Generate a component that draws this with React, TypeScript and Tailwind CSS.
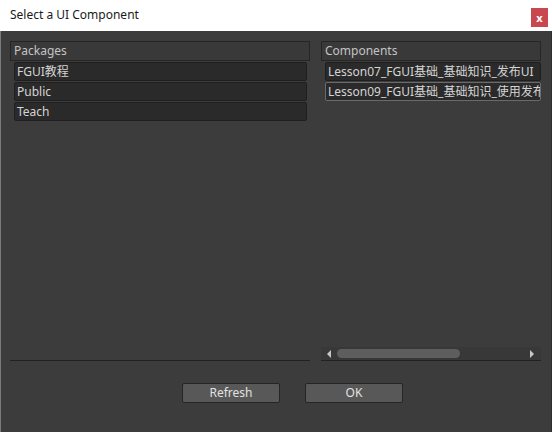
const font = { fontFamily: '"Noto Sans", "Noto Sans CJK SC", sans-serif' };

const packages = ['FGUI教程', 'Public', 'Teach'];
const components = ['Lesson07_FGUI基础_基础知识_发布UI', 'Lesson09_FGUI基础_基础知识_使用发布的UI'];

function Header({ label }: { label: string }) {
    return (
        <div className="h-[20px] border border-[#262626] bg-[#393939] pl-[3px] text-[12px] leading-[18px] text-[#c4c4c4]">
            {label}
        </div>
    );
}

function Item({ label, focused }: { label: string; focused?: boolean }) {
    return (
        <div
            className={`h-[19px] overflow-hidden whitespace-nowrap rounded-[2px] border bg-[#2a2a2a] pl-[2px] text-[12px] leading-[17px] text-[#d4d4d4] ${
                focused ? 'border-[#6a6a6a]' : 'border-[#1f1f1f]'
            }`}
        >
            {label}
        </div>
    );
}

export default function App() {
    return (
        <div className="flex h-[432px] w-[552px] flex-col overflow-hidden bg-[#3c3c3c]" style={font}>
            {/* Title bar */}
            <div className="flex h-[31px] items-start justify-between bg-white">
                <span className="pl-[10px] pt-[7px] text-[12px] leading-[16px] text-[#1a1a1a]">Select a UI Component</span>
                <div className="mr-[4px] mt-[8px] flex h-[19px] w-[17px] items-center justify-center bg-[#c9474f] text-[11px] font-bold leading-none text-white">
                    x
                </div>
            </div>

            {/* Body */}
            <div className="flex flex-1 flex-col border-l border-r border-l-[#7a7a7a] border-r-[#2e2e2e]">
                <div className="flex gap-[11px] pl-[9px] pt-[10px]">
                    {/* Packages */}
                    <div className="flex h-[320px] w-[300px] flex-col">
                        <Header label="Packages" />
                        <div className="flex flex-1 flex-col gap-[1px] pl-[4px] pr-[3px] pt-[1px]">
                            {packages.map(p => (
                                <Item key={p} label={p} />
                            ))}
                        </div>
                        <div className="h-[1px] bg-[#222222]" />
                    </div>

                    {/* Components */}
                    <div className="flex h-[320px] w-[220px] flex-col">
                        <Header label="Components" />
                        <div className="flex flex-1 flex-col gap-[1px] overflow-hidden pl-[4px] pt-[1px]">
                            {components.map((c, i) => (
                                <Item key={c} label={c} focused={i === 1} />
                            ))}
                        </div>
                        {/* Horizontal scrollbar */}
                        <div className="flex h-[14px] items-center border-b border-[#222222] bg-[#383838] px-[5px]">
                            <svg width="6" height="8" viewBox="0 0 6 8" className="mr-[5px]">
                                <path d="M5 0 L1 4 L5 8 Z" fill="#c8c8c8" />
                            </svg>
                            <div className="h-[9px] w-[123px] rounded-full bg-[#5e5e5e]" />
                            <div className="flex-1" />
                            <svg width="6" height="8" viewBox="0 0 6 8" className="mr-[1px]">
                                <path d="M1 0 L5 4 L1 8 Z" fill="#c8c8c8" />
                            </svg>
                        </div>
                    </div>
                </div>

                {/* Buttons */}
                <div className="flex gap-[25px] pl-[181px] pt-[22px]">
                    <button className="h-[20px] w-[98px] rounded-[2px] border border-[#252525] bg-[#585858] text-[12px] leading-[16px] text-[#e2e2e2]">
                        Refresh
                    </button>
                    <button className="h-[20px] w-[98px] rounded-[2px] border border-[#252525] bg-[#585858] text-[12px] leading-[16px] text-[#e2e2e2]">
                        OK
                    </button>
                </div>
            </div>
        </div>
    );
}
